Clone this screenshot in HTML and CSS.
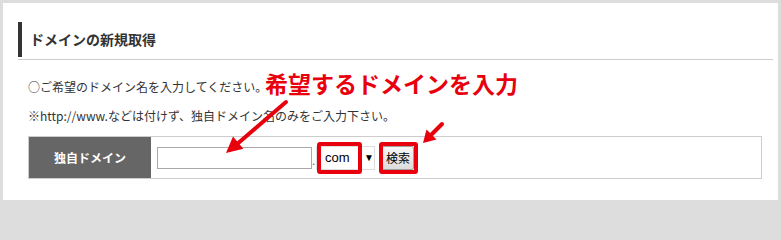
FILE: index.html
```html
<!DOCTYPE html>
<html lang="ja">
<head>
<meta charset="utf-8">
<link rel="stylesheet" href="styles.css">
</head>
<body>
<div class="panel">
  <div class="heading-wrap">
    <h2 class="heading">ドメインの新規取得</h2>
  </div>
  <div class="content">
    <p class="note">○ご希望のドメイン名を入力してください。</p>
    <p class="note note-2">※http://www.などは付けず、独自ドメイン名のみをご入力下さい。</p>
    <div class="form-row">
      <div class="form-label">独自ドメイン</div>
      <div class="form-field">
        <input class="domain-input" type="text">
        <span class="dot">.</span>
        <div class="tld-select"><span class="tld-value">com</span><span class="tld-arrow">▼</span></div>
        <button class="search-btn" type="button">検索</button>
      </div>
    </div>
  </div>
</div>

<div class="callout">希望するドメインを入力</div>
<div class="hl hl-select"></div>
<div class="hl hl-button"></div>
<svg class="arrows" width="781" height="206" viewBox="0 0 781 206">
  <line x1="286" y1="102" x2="236" y2="145" stroke="#e8000d" stroke-width="4" stroke-linecap="round"/>
  <polygon points="226,153 243.4,148.7 233,136.5" fill="#e8000d"/>
  <line x1="442" y1="124" x2="432" y2="134" stroke="#e8000d" stroke-width="4" stroke-linecap="round"/>
  <polygon points="423,143 436.5,139.5 426.5,129.5" fill="#e8000d"/>
</svg>
</body>
</html>
```
FILE: styles.css
```css
html, body {
  margin: 0;
  padding: 0;
}
body {
  background: #dddddd;
  width: 781px;
  height: 206px;
  overflow: hidden;
  position: relative;
  font-family: "Noto Sans CJK JP", sans-serif;
  color: #333;
}
.panel {
  margin: 3px 3px 0 3px;
  height: 197px;
  background: #fff;
  box-sizing: border-box;
  padding: 19px 5px 0 15px;
}
.heading-wrap {
  border-bottom: 1px solid #cccccc;
  padding-bottom: 2px;
}
.heading {
  margin: 0;
  border-left: 4px solid #333;
  height: 35px;
  line-height: 35px;
  padding-left: 8px;
  font-size: 14px;
  font-weight: bold;
  color: #333;
}
.content {
  padding: 0 11px 0 10px;
}
.note {
  margin: 17px 0 0 0;
  font-size: 12px;
  line-height: 20px;
  color: #333;
}
.note-2 {
  margin-top: 9px;
}
.form-row {
  margin-top: 10px;
  display: flex;
  border: 1px solid #cccccc;
  height: 41px;
}
.form-label {
  width: 122px;
  background: #666666;
  color: #fff;
  font-weight: bold;
  font-size: 12px;
  display: flex;
  align-items: center;
  justify-content: center;
}
.form-field {
  display: flex;
  align-items: center;
  padding-left: 6px;
}
.domain-input {
  width: 155px;
  height: 22px;
  box-sizing: border-box;
  border: 1px solid #a9a9a9;
  margin: 1px 0 0 0;
  padding: 0;
}
.dot {
  width: 4px;
  font-size: 12px;
  font-family: "Liberation Sans", sans-serif;
  color: #555;
  padding-top: 6px;
}
.tld-select {
  width: 59px;
  height: 24px;
  box-sizing: border-box;
  border: 1px solid #dddddd;
  display: flex;
  align-items: center;
  font-family: "Liberation Sans", sans-serif;
  font-size: 13px;
  color: #000;
}
.tld-value {
  padding-left: 8px;
  width: 38px;
}
.tld-arrow {
  font-size: 10px;
  padding-left: 1px;
}
.search-btn {
  margin-left: 7px;
  width: 32px;
  height: 24px;
  padding: 0;
  border: 1px solid #a0a0a0;
  border-radius: 2px;
  background: linear-gradient(#f6f6f6, #dcdcdc);
  font-family: "Noto Sans CJK JP", sans-serif;
  font-size: 12px;
  color: #000;
}
.callout {
  position: absolute;
  left: 265px;
  top: 72px;
  font-size: 23px;
  line-height: 23px;
  font-weight: bold;
  color: #e8000d;
  white-space: nowrap;
}
.hl {
  position: absolute;
  top: 142px;
  height: 32px;
  box-sizing: border-box;
  border: 4px solid #e8000d;
  border-radius: 3px;
}
.hl-select {
  left: 317px;
  width: 45px;
}
.hl-button {
  left: 379px;
  width: 39px;
}
.arrows {
  position: absolute;
  left: 0;
  top: 0;
  pointer-events: none;
}
```
